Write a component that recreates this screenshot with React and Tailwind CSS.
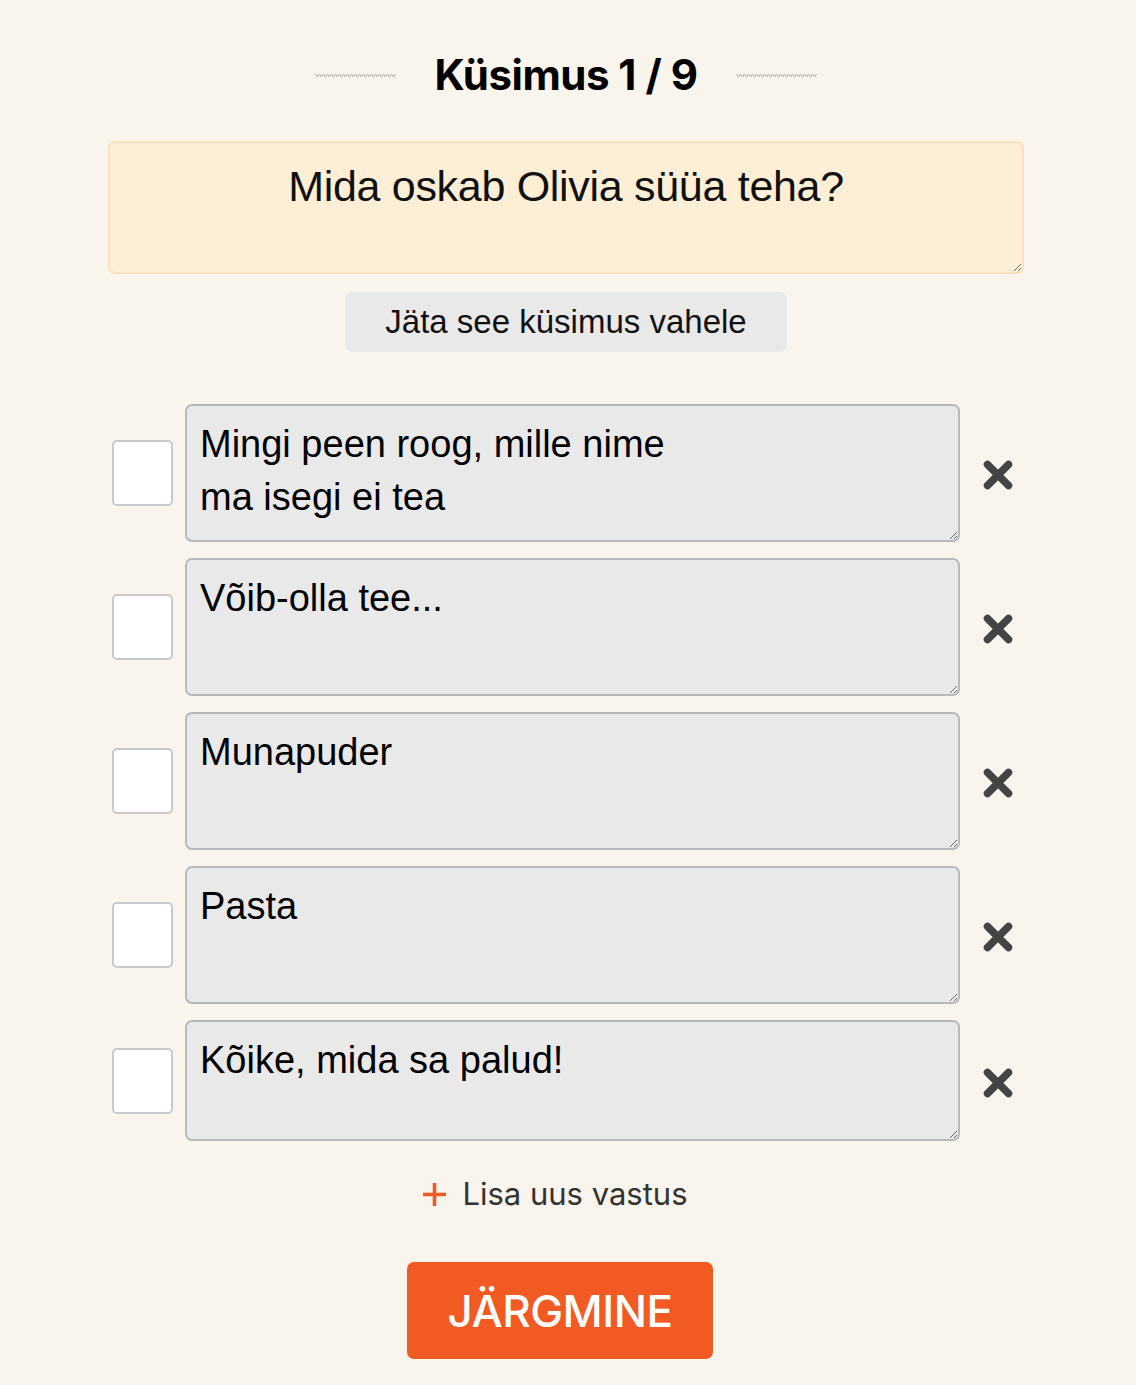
import React from "react";

const answers = [
  { text: "Mingi peen roog, mille nime\nma isegi ei tea", tall: true },
  { text: "Võib-olla tee...", tall: true },
  { text: "Munapuder", tall: true },
  { text: "Pasta", tall: true },
  { text: "Kõike, mida sa palud!", tall: false },
];

function Wave() {
  let pts = "";
  for (let i = 0; i <= 40; i++) {
    pts += `${i * 2},${i % 2 === 0 ? 1 : 4} `;
  }
  return (
    <svg width="83" height="5" viewBox="0 0 80 5" className="block">
      <polyline points={pts} fill="none" stroke="#aaa69e" strokeWidth="1" />
    </svg>
  );
}

function CloseIcon() {
  return (
    <svg width="32" height="32" viewBox="0 0 32 32" className="block">
      <path
        d="M5.5 5.5 L26.5 26.5 M26.5 5.5 L5.5 26.5"
        stroke="#444444"
        strokeWidth="7.5"
        strokeLinecap="round"
      />
    </svg>
  );
}

function AnswerRow({ text, tall }) {
  return (
    <div className="flex items-center">
      <div className="ml-1 h-[66px] w-[61px] shrink-0 rounded-[5px] border-2 border-[#c9c9c9] bg-white" />
      <textarea
        defaultValue={text}
        className={`ml-3 w-[775px] shrink-0 rounded-[7px] border-2 border-[#b9b9b9] bg-[#e9e9e9] pl-[13px] pr-4 pt-[12px] font-['Liberation_Sans',Arial,sans-serif] text-[38px] leading-[53px] text-black outline-none ${
          tall ? "h-[138px]" : "h-[121px]"
        }`}
      />
      <button className="ml-[22px] mt-1 shrink-0">
        <CloseIcon />
      </button>
    </div>
  );
}

export default function App() {
  return (
    <div className="min-h-[1385px] bg-[#faf5ec] font-['Inter',sans-serif] text-black">
      <div className="ml-[108px] w-[916px] pb-[27px] pt-[50px]">
        <div className="flex items-center justify-center">
          <Wave />
          <h1 className="mx-[38px] text-[42px] font-bold leading-[50px] tracking-[-0.5px]">
            Küsimus 1 / 9
          </h1>
          <Wave />
        </div>

        <textarea
          defaultValue="Mida oskab Olivia süüa teha?"
          className="mt-[41px] block h-[133px] w-full rounded-[7px] border-2 border-[#f7e2bd] bg-[#fdeed6] px-4 pt-[18px] text-center font-['Liberation_Sans',Arial,sans-serif] text-[43px] leading-[50px] tracking-[-0.3px] text-[#111] outline-none"
        />

        <div className="mt-[18px] flex justify-center">
          <button className="h-[60px] w-[442px] rounded-[7px] bg-[#e9e9e9] font-['Liberation_Sans',Arial,sans-serif] text-[33px] text-[#111]">
            Jäta see küsimus vahele
          </button>
        </div>

        <div className="mt-[52px] flex flex-col gap-4">
          {answers.map((a) => (
            <AnswerRow key={a.text} text={a.text} tall={a.tall} />
          ))}
        </div>

        <div className="mt-[33px] flex items-center justify-center pr-[22px]">
          <button className="flex items-center gap-[15px] text-[31px] leading-[40px] text-[#333]">
            <svg width="25" height="25" viewBox="0 0 25 25" className="block">
              <path d="M12.5 1 V24 M1 12.5 H24" stroke="#ef5a24" strokeWidth="3.5" />
            </svg>
            Lisa uus vastus
          </button>
        </div>

        <div className="mt-[48px] flex justify-center pr-[12px]">
          <button className="h-[97px] w-[306px] rounded-[7px] bg-[#f15a22] text-[44px] font-medium tracking-[-0.5px] text-white">
            JÄRGMINE
          </button>
        </div>
      </div>
    </div>
  );
}
